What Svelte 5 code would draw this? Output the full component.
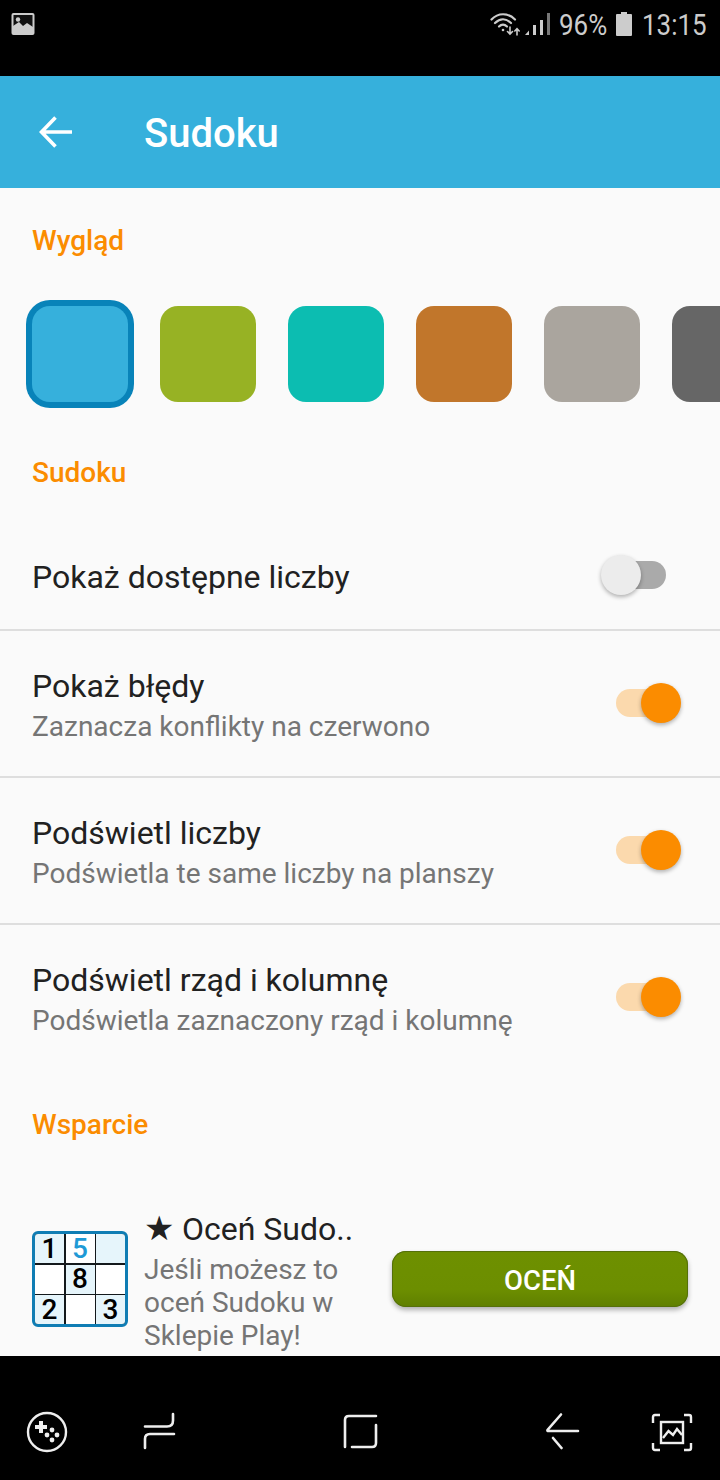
<script>
  const swatches = ['#97b224', '#0cbdb1', '#c1762b', '#aaa59e', '#666666'];
  const rows = [
    { title: 'Pokaż błędy', sub: 'Zaznacza konflikty na czerwono' },
    { title: 'Podświetl liczby', sub: 'Podświetla te same liczby na planszy' },
    { title: 'Podświetl rząd i kolumnę', sub: 'Podświetla zaznaczony rząd i kolumnę' }
  ];
  const cells = [
    { v: '1', c: 'tint' }, { v: '5', c: 'blue' }, { v: '', c: 'tint' },
    { v: '', c: '' }, { v: '8', c: 'tint' }, { v: '', c: '' },
    { v: '2', c: 'tint' }, { v: '', c: '' }, { v: '3', c: 'tint' }
  ];
</script>

<div class="screen">
  <header class="status">
    <svg class="pic" width="24" height="24" viewBox="0 0 24 24">
      <rect x="0.5" y="1" width="23" height="22" rx="2" fill="#ccc" />
      <rect x="2.5" y="3" width="19" height="13" fill="#111" />
      <circle cx="7" cy="7.5" r="2.2" fill="#ccc" />
      <path d="M2 18 L2 14 L8 10 L12 14 L16 11 L22 15 L22 18 Z" fill="#ccc" />
    </svg>
    <div class="status-right">
      <svg width="62" height="24" viewBox="0 0 62 24" fill="none" stroke="#ccc" stroke-linecap="round">
        <path d="M1.5 7.5 C8 0.5 18 0.5 25 7.5" stroke-width="2.2" />
        <path d="M5 11 C10 6 16 6 21 11" stroke-width="2.2" />
        <path d="M9 14.5 C11.5 12 14.5 12 17 14.5" stroke-width="2.2" />
        <circle cx="13" cy="18" r="1.3" fill="#ccc" stroke="none" />
        <path d="M20 15 V22 M17.5 19.5 L20 22 L22.5 19.5" stroke-width="1.6" />
        <path d="M27 23 V17 M24.8 19 L27 16.7 L29.2 19" stroke-width="1.6" />
        <path d="M35 23 L39 18.5 V23 Z" fill="#ccc" stroke="none" />
        <rect x="43" y="13" width="3" height="10" fill="#ccc" stroke="none" />
        <rect x="50" y="8" width="3" height="15" fill="#ccc" stroke="none" />
        <rect x="57" y="1" width="3" height="22" fill="#777" stroke="none" />
      </svg>
      <span class="stat pct">96%</span>
      <svg class="batt" width="16" height="24" viewBox="0 0 16 24">
        <path d="M5 0 H11 V2 H15 A1 1 0 0 1 16 3 V23 A1 1 0 0 1 15 24 H1 A1 1 0 0 1 0 23 V3 A1 1 0 0 1 1 2 H5 Z" fill="#ccc" />
      </svg>
      <span class="stat clock">13:15</span>
    </div>
  </header>

  <div class="appbar">
    <svg class="back" width="34" height="32" viewBox="0 0 34 32" fill="none" stroke="#fff" stroke-width="3.6">
      <path d="M33 16 H3 M16.5 1.5 L2.5 16 L16.5 30.5" />
    </svg>
    <h1>Sudoku</h1>
  </div>

  <main class="content">
    <h2 class="first">Wygląd</h2>
    <div class="swatches">
      <div class="swatch selected"></div>
      {#each swatches as color}
        <div class="swatch" style:background={color}></div>
      {/each}
    </div>

    <h2>Sudoku</h2>
    <div class="row single">
      <span class="title">Pokaż dostępne liczby</span>
      <span class="switch"><span class="track"></span><span class="knob"></span></span>
    </div>
    {#each rows as row, i}
      <div class="row" class:last={i === rows.length - 1}>
        <div class="texts">
          <span class="title">{row.title}</span>
          <span class="sub">{row.sub}</span>
        </div>
        <span class="switch on"><span class="track"></span><span class="knob"></span></span>
      </div>
    {/each}

    <h2 class="support">Wsparcie</h2>
    <div class="rate">
      <div class="logo">
        {#each cells as cell}
          <span class="cell {cell.c}">{cell.v}</span>
        {/each}
      </div>
      <div class="rate-text">
        <span class="title"><span class="star">★</span> Oceń Sudo..</span>
        <span class="sub">Jeśli możesz to</span>
        <span class="sub">oceń Sudoku w</span>
        <span class="sub">Sklepie Play!</span>
      </div>
      <button class="rate-btn">OCEŃ</button>
    </div>
  </main>

  <nav class="nav">
    <svg class="i-game" width="44" height="44" viewBox="0 0 44 44" fill="none" stroke="#eee" stroke-width="2.4">
      <circle cx="22" cy="22" r="19" />
      <path d="M16 11 V23 M10 17 H22" stroke-width="4" />
      <g fill="#eee" stroke="none">
        <circle cx="27" cy="20" r="2.4" /><circle cx="22" cy="25" r="2.4" /><circle cx="32" cy="25" r="2.4" /><circle cx="27" cy="30" r="2.4" />
      </g>
    </svg>
    <svg class="i-recent" width="44" height="44" viewBox="0 0 44 44" fill="none" stroke="#eee" stroke-width="2.6" stroke-linecap="round">
      <path d="M8 15.5 H30 Q36 15.5 36 9.5 V3" />
      <path d="M37 23 H13 Q8 23 8 28 V37" />
    </svg>
    <svg class="i-home" width="44" height="44" viewBox="0 0 44 44" fill="none" stroke="#eee" stroke-width="2.6" stroke-linecap="round">
      <path d="M38 5 H11 Q7 5 7 9 V36" />
      <path d="M38 14 V32 Q38 36 34 36 H14" />
    </svg>
    <svg class="i-back" width="44" height="44" viewBox="0 0 44 44" fill="none" stroke="#eee" stroke-width="2.6" stroke-linecap="round">
      <path d="M21 3.5 L7.5 19 Q7 20 8.5 20 H38" />
      <path d="M13 27 L21.5 37" />
    </svg>
    <svg class="i-shot" width="44" height="44" viewBox="0 0 44 44" fill="none" stroke="#eee" stroke-width="2.4">
      <path d="M3 12 V6 Q3 4 5 4 H10 M34 4 H39 Q41 4 41 6 V12 M41 32 V37 Q41 39 39 39 H34 M10 39 H5 Q3 39 3 37 V32" />
      <rect x="11" y="11" width="22" height="21" />
      <path d="M13 27 L18.5 20 L23 24 L27 18 L32 24" />
    </svg>
  </nav>
</div>

<style>
  :global(body) { margin: 0; background: #000; }
  .screen {
    width: 720px;
    height: 1480px;
    display: flex;
    flex-direction: column;
    overflow: hidden;
    font-family: Roboto, "Noto Sans", sans-serif;
  }
  .status {
    height: 76px;
    flex: none;
    background: #000;
    display: flex;
    justify-content: space-between;
    box-sizing: border-box;
    padding: 12px 13px 0 11px;
    color: #ccc;
  }
  .pic { flex: none; }
  .status-right { display: flex; align-items: flex-start; height: 26px; }
  .status-right svg { flex: none; }
  .stat {
    display: inline-block;
    font-size: 30px;
    line-height: 26px;
    height: 26px;
    white-space: nowrap;
    transform: scaleX(0.865);
    transform-origin: left center;
  }
  .pct { width: 48px; margin-left: 7px; }
  .batt { margin-left: 9px; }
  .clock { width: 65px; margin-left: 10px; }

  .appbar {
    height: 112px;
    flex: none;
    background: #36b0dc;
    display: flex;
    align-items: center;
    color: #fff;
    padding-left: 39px;
  }
  .back { flex: none; }
  h1 {
    margin: 4px 0 0 71px;
    font-size: 40px;
    font-weight: 500;
    line-height: 44px;
  }
  .content {
    height: 1168px;
    flex: none;
    background: #fafafa;
    overflow: hidden;
    box-sizing: border-box;
  }
  h2 {
    height: 32px;
    line-height: 32px;
    padding-left: 32px;
    font-size: 28px;
    font-weight: 500;
    color: #fb8c00;
    margin: 48px 0 0;
    position: relative;
    top: 1px;
  }
  h2.first { margin-top: 36px; }
  h2.support { margin-top: 36px; }

  .swatches {
    display: flex;
    align-items: center;
    gap: 32px;
    margin-top: 44px;
    padding-left: 32px;
    height: 108px;
  }
  .swatch {
    width: 96px;
    height: 96px;
    border-radius: 18px;
    flex: none;
  }
  .swatch.selected {
    background: #36b0dc;
    box-shadow: 0 0 0 6px #0883b9;
  }

  .row {
    height: 147px;
    box-sizing: border-box;
    border-bottom: 2px solid #dedede;
    padding: 0 54px 0 32px;
    display: flex;
    align-items: center;
    justify-content: space-between;
  }
  .row.single { height: 107px; margin-top: 36px; padding-top: 1px; }
  .row.single .switch { margin-top: -4px; }
  .row.last { border-bottom: 2px solid transparent; }
  .texts { display: flex; flex-direction: column; margin-top: 5px; }
  .texts .title { margin-bottom: 1px; }
  .title {
    font-size: 32px;
    line-height: 40px;
    color: #212121;
    white-space: nowrap;
  }
  .sub {
    font-size: 28px;
    line-height: 40px;
    color: #757575;
    white-space: nowrap;
  }

  .switch {
    position: relative;
    display: block;
    width: 65px;
    height: 28px;
    flex: none;
  }
  .track {
    position: absolute;
    right: 0;
    top: 0;
    width: 52px;
    height: 28px;
    border-radius: 14px;
    background: #aaaaaa;
  }
  .knob {
    position: absolute;
    left: 0;
    top: -6px;
    width: 40px;
    height: 40px;
    border-radius: 50%;
    background: #ececec;
    box-shadow: 0 2px 4px rgba(0, 0, 0, 0.3);
  }
  .switch.on { margin-right: -15px; margin-top: -2px; }
  .switch.on .track { left: 0; right: auto; background: #fbd9ad; }
  .switch.on .knob { left: 25px; background: #fb8c00; }

  .rate {
    margin-top: 69px;
    padding: 0 32px;
    display: flex;
    align-items: flex-start;
  }
  .logo {
    flex: none;
    margin-top: 22px;
    width: 96px;
    height: 96px;
    box-sizing: border-box;
    border: 3px solid #0f7db4;
    border-radius: 6px;
    background: #14191c;
    display: grid;
    grid-template-columns: repeat(3, minmax(0, 1fr));
    grid-template-rows: repeat(3, minmax(0, 1fr));
    gap: 1.5px;
    overflow: hidden;
  }
  .cell {
    display: flex;
    align-items: center;
    justify-content: center;
    background: #fff;
    color: #000;
    font-family: Roboto, sans-serif;
    font-weight: 500;
    font-size: 28px;
    line-height: 26px;
  }
  .cell.tint { background: #e6f5fb; }
  .cell.blue { background: #fff; color: #1f9ad6; }
  .rate-text {
    flex: none;
    width: 248px;
    margin-left: 16px;
    display: flex;
    flex-direction: column;
  }
  .rate-text .title { line-height: 40px; margin-top: -1px; }
  .star { font-size: 34px; line-height: 40px; }
  .rate-text .sub { line-height: 33px; }
  .rate-text .title + .sub { margin-top: 4px; }
  .rate-btn {
    flex: none;
    width: 296px;
    height: 56px;
    margin-top: 42px;
    border: none;
    border-radius: 14px;
    background: linear-gradient(#6e9000, #6c8e00 70%, #5f7f00);
    box-shadow: inset 0 0 0 1px #55700a, 0 3px 5px rgba(0, 0, 0, 0.3);
    color: #fff;
    font-family: Roboto, sans-serif;
    font-size: 27.5px;
    font-weight: 500;
    padding: 3px 0 0;
  }

  .nav {
    height: 124px;
    flex: none;
    background: #000;
    display: flex;
    align-items: flex-start;
    box-sizing: border-box;
    padding: 54px 0 0 25px;
  }
  .nav svg { flex: none; }
  .i-recent { margin-left: 68px; margin-top: 1px; }
  .i-home { margin-left: 157px; margin-top: 1px; }
  .i-back { margin-left: 158px; margin-top: 1px; }
  .i-shot { margin-left: 66px; margin-top: 1px; }
</style>
